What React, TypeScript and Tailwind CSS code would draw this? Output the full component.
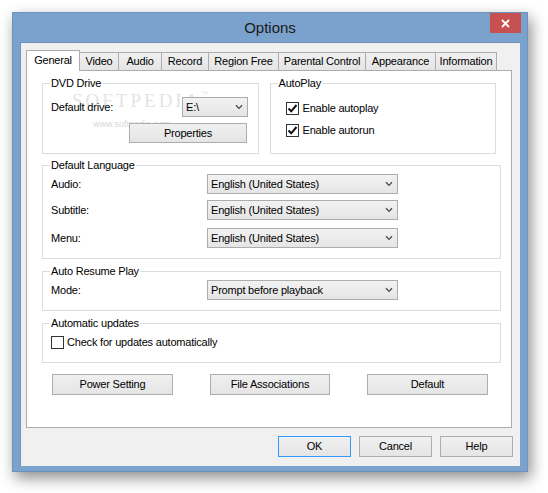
import React from 'react';

const font = { fontFamily: '"Liberation Sans", Arial, sans-serif' };

const Chevron = () => (
  <svg width="8" height="6" viewBox="0 0 8 6" className="shrink-0">
    <path d="M1 1.2 L4 4.4 L7 1.2" fill="none" stroke="#4a4a4a" strokeWidth="1.3" />
  </svg>
);

const Combo = ({ value, w }: { value: string; w: string }) => (
  <div className={`${w} h-[20px] flex items-center justify-between pl-[3px] pr-[4px] border border-[#acacac] bg-gradient-to-b from-[#f2f2f2] to-[#e5e5e5]`}>
    <span className="leading-none whitespace-nowrap">{value}</span>
    <Chevron />
  </div>
);

const Button = ({ label, w, h = 'h-[21px]', focus = false }: any) => (
  <div className={`${w} ${h} flex items-center justify-center whitespace-nowrap border ${focus ? 'border-[#3399ff]' : 'border-[#adadad]'} bg-gradient-to-b from-[#f0f0f0] to-[#e5e5e5]`}>
    {label}
  </div>
);

const Check = ({ checked }: { checked: boolean }) => (
  <div className="w-[13px] h-[13px] border border-[#333] bg-white flex items-center justify-center shrink-0">
    {checked && (
      <svg width="11" height="11" viewBox="0 0 11 11">
        <path d="M1.5 5.5 L4.2 8.3 L9.5 2" fill="none" stroke="#111" strokeWidth="2" />
      </svg>
    )}
  </div>
);

const Group = ({ title, className, children }: any) => (
  <div className={`relative border border-[#dcdcdc] ${className}`}>
    <span className="absolute left-[7px] top-[-8px] px-[1px] bg-white leading-[14px] whitespace-nowrap">{title}</span>
    {children}
  </div>
);

const tabs = [
  { label: 'General', w: 'w-[54px]' },
  { label: 'Video', w: 'w-[40px]' },
  { label: 'Audio', w: 'w-[44px]' },
  { label: 'Record', w: 'w-[48px]' },
  { label: 'Region Free', w: 'w-[71px]' },
  { label: 'Parental Control', w: 'w-[88px]' },
  { label: 'Appearance', w: 'w-[71px]' },
  { label: 'Information', w: 'w-[62px]' },
];

export default function App() {
  return (
    <div className="w-[548px] h-[493px] bg-white pt-[12px] pl-[12px] text-[11px] tracking-[-0.2px] text-black" style={font}>
      <div className="w-[516px] h-[460px] border border-[#6d92bd] bg-[#7ba2cc] flex flex-col shadow-[3px_6px_14px_rgba(0,0,0,0.45)]">
        {/* Title bar */}
        <div className="relative h-[29px] flex items-center justify-center">
          <span className="text-[15px] tracking-normal text-[#1a1a1a] mt-[2px]">Options</span>
          <div className="absolute right-[6px] top-0 w-[31px] h-[20px] bg-[#c75050] flex items-center justify-center">
            <svg width="9" height="9" viewBox="0 0 9 9">
              <path d="M1 1 L8 8 M8 1 L1 8" stroke="#fff" strokeWidth="1.8" />
            </svg>
          </div>
        </div>

        {/* Client area */}
        <div className="ml-[7px] w-[500px] h-[424px] bg-[#f0f0f0] border-t border-l border-[#6f93bd] pt-[7px] pl-[5px]">
          {/* Tabs */}
          <div className="flex items-end h-[20px]">
            {tabs.map((t, i) => (
              <div
                key={t.label}
                className={`${t.w} flex items-center justify-center whitespace-nowrap border-t border-l border-r border-[#acacac] ${
                  i === 0
                    ? 'h-[21px] -mb-px bg-white relative z-10 pb-[2px]'
                    : '-ml-px h-[18px] bg-gradient-to-b from-[#f0f0f0] to-[#e5e5e5]'
                }`}
              >
                {t.label}
              </div>
            ))}
          </div>

          {/* Panel */}
          <div className="relative w-[486px] h-[358px] border border-[#acacac] bg-white px-[15px] pt-[12px] flex flex-col">
            <div className="absolute left-[45px] top-[20px] pointer-events-none select-none text-[#e4e4e4] leading-none tracking-normal" style={{ fontFamily: '"Liberation Serif", serif' }}>
              <span className="text-[19px] tracking-[3px]">SOFTPEDIA</span>
              <span className="text-[7px] align-top">™</span>
            </div>
            <div className="absolute left-[66px] top-[49px] pointer-events-none select-none text-[9px] leading-none tracking-normal text-[#d6d6d6]">www.softpedia.com</div>

            <div className="flex gap-[11px]">
              <Group title="DVD Drive" className="w-[219px] h-[71px] pt-[13px] pl-[8px]">
                <div className="flex items-center">
                  <span className="w-[131px] relative">Default drive:</span>
                  <Combo value="E:\" w="w-[66px]" />
                </div>
                <div className="mt-[6px] ml-[78px]">
                  <Button label="Properties" w="w-[118px]" h="h-[20px]" />
                </div>
              </Group>
              <Group title="AutoPlay" className="w-[229px] h-[71px] pt-[18px] pl-[15px] flex flex-col gap-[9px]">
                <div className="flex items-center h-[13px] gap-[4px]">
                  <Check checked />
                  <span>Enable autoplay</span>
                </div>
                <div className="flex items-center h-[13px] gap-[4px]">
                  <Check checked />
                  <span>Enable autorun</span>
                </div>
              </Group>
            </div>

            <Group title="Default Language" className="mt-[11px] w-[459px] h-[94px] pt-[8px] pl-[8px]">
              <div className="flex items-center">
                <span className="w-[156px]">Audio:</span>
                <Combo value="English (United States)" w="w-[191px]" />
              </div>
              <div className="flex items-center mt-[6px]">
                <span className="w-[156px]">Subtitle:</span>
                <Combo value="English (United States)" w="w-[191px]" />
              </div>
              <div className="flex items-center mt-[8px]">
                <span className="w-[156px]">Menu:</span>
                <Combo value="English (United States)" w="w-[191px]" />
              </div>
            </Group>

            <Group title="Auto Resume Play" className="mt-[12px] w-[459px] h-[40px] pt-[8px] pl-[8px]">
              <div className="flex items-center">
                <span className="w-[156px]">Mode:</span>
                <Combo value="Prompt before playback" w="w-[191px]" />
              </div>
            </Group>

            <Group title="Automatic updates" className="mt-[12px] w-[459px] h-[40px] pt-[12px] pl-[8px]">
              <div className="flex items-center h-[13px] gap-[3px]">
                <Check checked={false} />
                <span>Check for updates automatically</span>
              </div>
            </Group>

            <div className="mt-[11px] pl-[10px] flex gap-[37px]">
              <Button label="Power Setting" w="w-[121px]" />
              <Button label="File Associations" w="w-[120px]" />
              <Button label="Default" w="w-[121px]" />
            </div>
          </div>

          {/* Dialog buttons */}
          <div className="mt-[8px] pr-[7px] flex justify-end gap-[8px]">
            <Button label="OK" w="w-[73px]" focus />
            <Button label="Cancel" w="w-[73px]" />
            <Button label="Help" w="w-[73px]" />
          </div>
        </div>
      </div>
    </div>
  );
}
